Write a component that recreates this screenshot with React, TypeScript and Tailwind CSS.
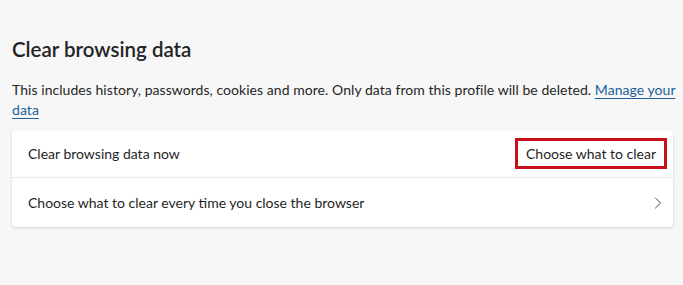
import { ChevronRight } from "lucide-react";

export default function App() {
  return (
    <div
      className="w-[683px] h-[285px] bg-[#f7f7f7] text-[#1f1f1f] px-3 pt-[36px]"
      style={{ fontFamily: "Lato, 'Noto Sans', sans-serif" }}
    >
      <h1 className="text-[20.5px] leading-[26px] font-semibold text-[#242424]">Clear browsing data</h1>
      <p className="mt-[18px] w-[671px] text-[14px] leading-[20px] tracking-[0.05px] text-[#262626]">
        This includes history, passwords, cookies and more. Only data from this profile will be
        deleted.{" "}
        <a href="#" className="text-[#1d5f99] underline underline-offset-[3px] decoration-[#1d5f99]">
          Manage your
        </a>{" "}
        <a href="#" className="text-[#1d5f99] underline underline-offset-[3px] decoration-[#1d5f99]">
          data
        </a>
      </p>
      <div className="mt-[10px] w-[661px] bg-white rounded-[4px] shadow-[0_1px_3px_rgba(0,0,0,0.16)]">
        <div className="h-[48px] flex items-center justify-between pl-4 pr-[6px] border-b border-[#ebebeb]">
          <span className="text-[14px]">Clear browsing data now</span>
          <button className="h-[31px] px-[8px] border-[3px] border-[#c8101a] text-[14px] text-[#1f1f1f]">
            Choose what to clear
          </button>
        </div>
        <div className="h-[49px] flex items-center justify-between pl-4 pr-[5px]">
          <span className="text-[14px]">Choose what to clear every time you close the browser</span>
          <ChevronRight className="w-[20px] h-[20px] text-[#424242]" strokeWidth={1.2} />
        </div>
      </div>
    </div>
  );
}
